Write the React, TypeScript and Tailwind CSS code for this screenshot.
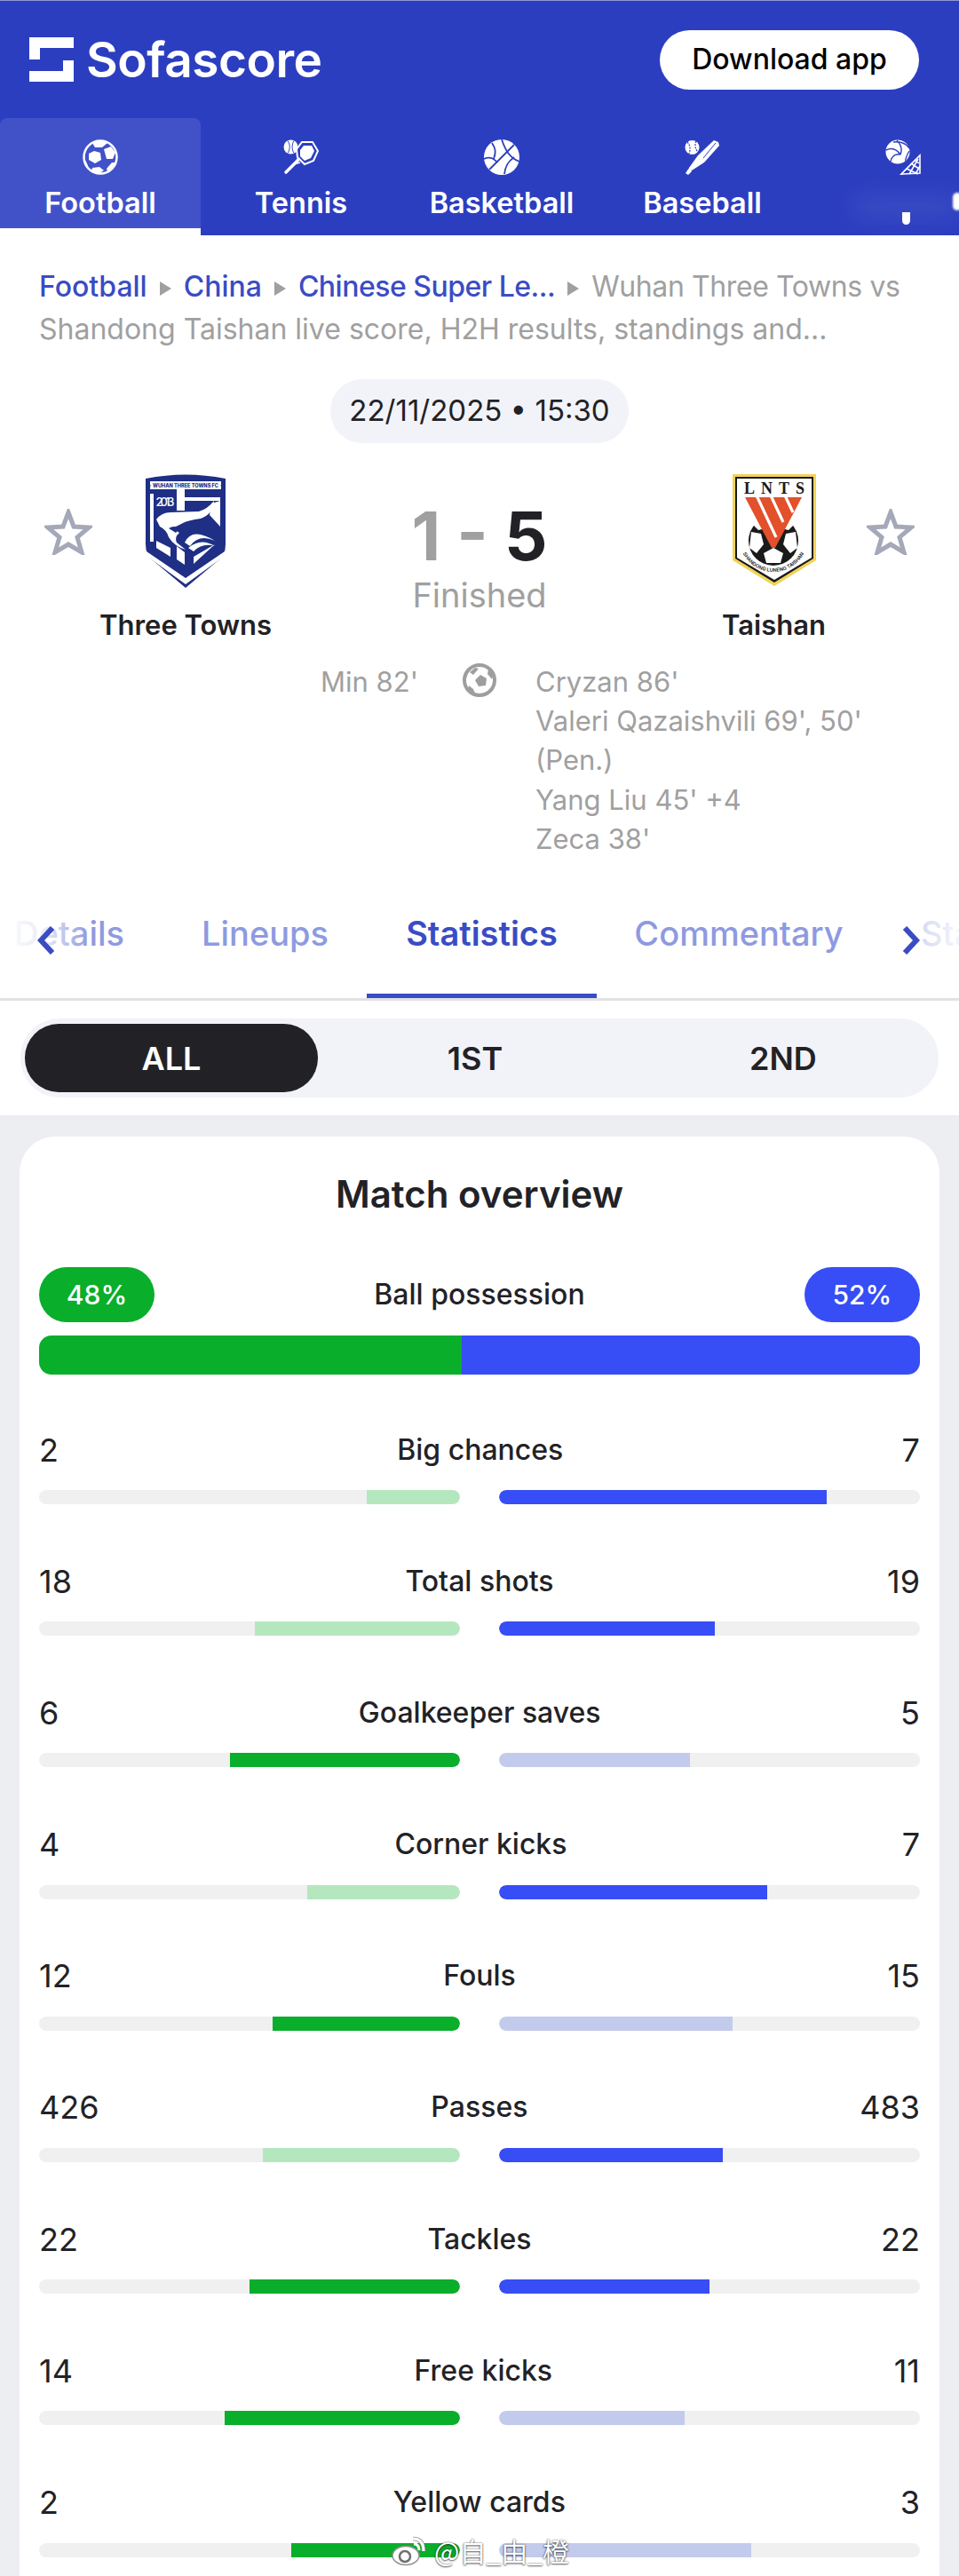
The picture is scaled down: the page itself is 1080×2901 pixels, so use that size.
import React from 'react';

const FootballIcon = () => (
  <svg width="40" height="40" viewBox="0 0 40 40" className="text-white">
    <circle cx="20" cy="20" r="18.5" fill="none" stroke="currentColor" strokeWidth="2.5" />
    <g fill="currentColor">
      <polygon points="13,13 20,15 21,23 14,27 7,23 7,16" />
      <polygon points="24,11 32,8 37,15 34,22 27,22" />
      <polygon points="11,4 20,1 28,4 22,9 14,9" />
      <polygon points="11,32 19,31 24,35 18,39 10,36" />
      <polygon points="33,26 37,26 34,32 28,36 27,33" />
      <polygon points="2,22 5,27 7,33 3,30" />
    </g>
  </svg>
);

const TennisIcon = () => (
  <svg width="40" height="40" viewBox="0 0 40 40" className="text-white">
    <circle cx="8.5" cy="8.5" r="8" fill="currentColor" />
    <path d="M5 1.5c3 4 3 10 0 14M12 1.5c-2.5 4-2.5 10 0 14" fill="none" stroke="#2c3ec0" strokeWidth="1" />
    <polygon points="21,3 33,3 39,13 34,24 24,28 16,20 15,11" fill="none" stroke="currentColor" strokeWidth="2" />
    <polygon points="23,7 32,7 35,13 31,21 24,24 19,19 19,12" fill="currentColor" />
    <path d="M17 23 L3 37" stroke="currentColor" strokeWidth="3.5" strokeLinecap="round" />
    <path d="M17 21 L12 28 L19 26" fill="none" stroke="currentColor" strokeWidth="1.5" />
  </svg>
);

const BasketballIcon = () => (
  <svg width="40" height="40" viewBox="0 0 40 40" className="text-white">
    <circle cx="20" cy="20" r="20" fill="currentColor" />
    <g fill="none" stroke="#2c3ec0" strokeWidth="1.8">
      <path d="M20 0c4 12 9 21 20 25" />
      <path d="M34 6 L6 34" />
      <path d="M9 4c4 6 5 10 2 18" />
      <path d="M0 22c6-3 11-1 15 4" />
      <path d="M23 39c1-9 4-14 11-19" />
    </g>
  </svg>
);

const BaseballIcon = () => (
  <svg width="40" height="40" viewBox="0 0 40 40" className="text-white">
    <circle cx="8.5" cy="9" r="8" fill="currentColor" />
    <path d="M3 3c3 3 4 8 2 13M13 2c-2 4-1 9 2 12" fill="none" stroke="#2c3ec0" strokeWidth="1.2" strokeDasharray="2 1.2" />
    <path d="M33 1 L38 3 L39 7 L22 26 L8 35 L5 32 L15 18 Z" fill="currentColor" />
    <path d="M35 4 L21 21" stroke="#2c3ec0" strokeWidth="1" />
    <path d="M6 31 L3 35 L1 38 L4 40 L8 36" fill="currentColor" />
  </svg>
);

const VolleyballIcon = () => (
  <svg width="40" height="40" viewBox="0 0 40 40" className="text-white">
    <circle cx="14" cy="14" r="13.5" fill="currentColor" />
    <g fill="none" stroke="#2c3ec0" strokeWidth="1.4">
      <path d="M13 1c5 5 6 11 4 16" />
      <path d="M1 12c6-3 11-2 16 5" />
      <path d="M6 25c1-6 5-9 11-8" />
      <path d="M27 13c-3 5-5 11-4 11" />
      <path d="M9 3c8-1 14 1 18 7" />
    </g>
    <g fill="none" stroke="currentColor" strokeWidth="1.6">
      <path d="M39 18 L39 38 L18 39 Z" />
      <path d="M24 33 L37 39M29 27 L38 33M33 23 L38 27M27 39 L37 22M34 39 L39 30" />
    </g>
  </svg>
);

const Star = () => (
  <svg width="54" height="52" viewBox="0 0 54 52">
    <path
      d="M27 4 L33 20 L50 21 L37 32 L42 49 L27 40 L12 49 L17 32 L4 21 L21 20 Z"
      fill="none"
      stroke="#a4a8b8"
      strokeWidth="5"
      strokeLinejoin="miter"
    />
  </svg>
);

const ThreeTownsCrest = () => (
  <svg width="94" height="130" viewBox="0 0 94 130">
    <path d="M2 6 Q47 -3 92 6 L92 80 Q92 92 84 98 L47 129 L10 98 Q2 92 2 80 Z" fill="#1e2f85" />
    <rect x="7" y="9" width="80" height="9" fill="#fff" />
    <text x="47" y="16" textAnchor="middle" fontSize="5.6" fontWeight="800" fill="#1e2f85" fontFamily="Inter, sans-serif">★ WUHAN THREE TOWNS FC ★</text>
    <text x="24" y="37" textAnchor="middle" fontSize="13" fontWeight="500" fill="#fff" fontFamily="Inter, sans-serif" textLength="21">2013</text>
    {/* cross stripes behind the tiger */}
    <path d="M7 23 H11 V77 H7 Z" fill="#fff" />
    <path d="M37 18 H46 V27 H86 V31 H46 V42 H37 Z" fill="#fff" />
    <path d="M76 34 L86 31 V60 L74 47 Z" fill="#fff" />
    {/* tiger head */}
    <path d="M14 52 Q20 44 30 44 L62 43 Q72 40 79 31 Q78 46 64 51 Q50 53 44 56 Q36 60 32 62 L40 67 Q34 72 37 78 L47 86 Q34 82 28 72 Q26 64 18 60 Z" fill="#fff" />
    <path d="M28 62 Q34 58 40 62 L36 67 Z" fill="#1e2f85" />
    {/* whiskers */}
    <path d="M46 78 Q54 60 80 76 Q62 68 52 82 Z" fill="#fff" />
    <path d="M50 84 Q64 72 80 82 Q66 78 56 88 Z" fill="#fff" />
    {/* lower panels */}
    <path d="M37 82 L46 89 V103 L37 97 Z" fill="#fff" />
    <path d="M56 94 L80 80 L56 102 Z" fill="#fff" />
    <path d="M14 76 L30 84 V94 L14 84 Z" fill="#fff" />
    {/* chevron */}
    <path d="M3 88 L47 118 L91 88 V93 L47 125 L3 93 Z" fill="#fff" />
  </svg>
);

const TaishanCrest = () => (
  <svg width="96" height="128" viewBox="0 0 96 128">
    <path d="M1 1 L95 1 L95 98 L48 127 L1 98 Z" fill="#f1d35b" />
    <path d="M4 4 L92 4 L92 96 L48 123 L4 96 Z" fill="#1a1a1a" />
    <path d="M6 6 L90 6 L90 95 L48 120 L6 95 Z" fill="#fff" />
    <text x="48" y="23" textAnchor="middle" fontSize="18" fontWeight="700" fill="#1a1a1a" fontFamily="Liberation Serif, serif" textLength="68">LNTS</text>
    <circle cx="47" cy="76" r="28" fill="#1a1a1a" />
    <polygon points="47,84 36,90 39,101 55,101 58,90" fill="#fff" />
    <polygon points="22,66 33,68 36,80 28,90 20,84" fill="#fff" />
    <polygon points="72,66 61,68 58,80 66,90 74,84" fill="#fff" />
    <polygon points="24,58 32,50 38,62 30,64" fill="#fff" />
    <polygon points="70,58 62,50 56,62 64,64" fill="#fff" />
    <polygon points="15,27 79,27 49,84 45,84" fill="#e2502c" />
    <g stroke="#fff" strokeWidth="3.2">
      <path d="M28 25 L50 72" />
      <path d="M44 25 L58 55" />
      <path d="M60 25 L69 44" />
    </g>
    <text fontSize="5.6" fontWeight="600" fill="#1a1a1a" fontFamily="Inter, sans-serif">
      <textPath href="#taishan-arc" startOffset="50%" textAnchor="middle">SHANDONG LUNENG TAISHAN</textPath>
    </text>
    <defs>
      <path id="taishan-arc" d="M8 72 A39 39 0 0 0 86 72" />
    </defs>
  </svg>
);

const GoalBall = () => (
  <svg width="38" height="38" viewBox="0 0 38 38">
    <circle cx="19" cy="19" r="17" fill="#fff" stroke="#9e9e9e" strokeWidth="4" />
    <polygon points="20,13 27,17 26,25 18,26 14,19" fill="#9e9e9e" />
    <polygon points="8,10 14,5 18,6 12,13" fill="#9e9e9e" />
    <polygon points="7,25 12,29 14,34 6,30" fill="#9e9e9e" />
    <polygon points="29,7 34,13 33,18 28,12" fill="#9e9e9e" />
  </svg>
);

const SofaLogo = () => (
  <svg width="50" height="50" viewBox="0 0 50 50" className="text-white">
    <path d="M0 0 H50 V12 H12 V25 H0 Z" fill="currentColor" />
    <path d="M50 26 V50 H0 V38 H38 V26 Z" fill="currentColor" />
  </svg>
);

const sports = [
  { name: 'Football', icon: <FootballIcon /> },
  { name: 'Tennis', icon: <TennisIcon /> },
  { name: 'Basketball', icon: <BasketballIcon /> },
  { name: 'Baseball', icon: <BaseballIcon /> },
];

const stats = [
  { label: 'Big chances', a: 2, b: 7, aStrong: false, bStrong: true },
  { label: 'Total shots', a: 18, b: 19, aStrong: false, bStrong: true },
  { label: 'Goalkeeper saves', a: 6, b: 5, aStrong: true, bStrong: false },
  { label: 'Corner kicks', a: 4, b: 7, aStrong: false, bStrong: true },
  { label: 'Fouls', a: 12, b: 15, aStrong: true, bStrong: false },
  { label: 'Passes', a: 426, b: 483, aStrong: false, bStrong: true },
  { label: 'Tackles', a: 22, b: 22, aStrong: true, bStrong: true },
  { label: 'Free kicks', a: 14, b: 11, aStrong: true, bStrong: false },
  { label: 'Yellow cards', a: 2, b: 3, aStrong: true, bStrong: false },
];

const scorers = ["Cryzan 86'", "Valeri Qazaishvili 69', 50' (Pen.)", "Yang Liu 45' +4", "Zeca 38'"];

const Caret = () => <span className="mx-[14px] inline-block border-y-[8px] border-l-[13px] border-y-transparent border-l-[#a0a0a0] align-[1px]" />;

const StatRow = ({ label, a, b, aStrong, bStrong }: (typeof stats)[number]) => {
  const total = a + b;
  return (
    <div className="h-[148.2px]">
      <div className="flex h-[53px] items-center justify-between text-[#222226]">
        <span className="text-[36px] leading-none">{a}</span>
        <span className="text-[32px] font-medium leading-none">{label}</span>
        <span className="text-[36px] leading-none">{b}</span>
      </div>
      <div className="mt-[19px] flex gap-[44px]">
        <div className="flex h-4 flex-1 justify-end overflow-hidden rounded-lg bg-[#f0f0f0]">
          <div
            className={`h-full rounded-r-lg ${aStrong ? 'bg-[#09ae2b]' : 'bg-[#b5e7bf]'}`}
            style={{ width: `${(a / total) * 100}%` }}
          />
        </div>
        <div className="h-4 flex-1 overflow-hidden rounded-lg bg-[#f0f0f0]">
          <div
            className={`h-full rounded-l-lg ${bStrong ? 'bg-[#374df5]' : 'bg-[#c3cbed]'}`}
            style={{ width: `${(b / total) * 100}%` }}
          />
        </div>
      </div>
    </div>
  );
};

const App = () => {
  return (
    <div className="relative h-[2901px] w-[1080px] overflow-hidden bg-white font-[Inter,sans-serif]">
      {/* Top bar */}
      <header className="h-[265px] border-t border-[#8f98d8] bg-[#2c3ec0]">
        <div className="flex h-[132px] items-center justify-between pl-[33px] pr-[45px]">
          <div className="flex items-center gap-[14px]">
            <SofaLogo />
            <span className="text-[55px] font-semibold leading-none tracking-[-0.5px] text-white">Sofascore</span>
          </div>
          <button className="h-[67px] w-[292px] rounded-full bg-white text-[32px] font-medium text-black">Download app</button>
        </div>
        <nav className="flex h-[132px] overflow-hidden">
          {sports.map((s, i) => (
            <div
              key={s.name}
              className={`flex w-[226px] shrink-0 flex-col items-center pt-[24px] ${i === 0 ? 'h-[132px] rounded-t-lg border-b-8 border-white bg-[#4152c9]' : ''}`}
            >
              {s.icon}
              <span className="mt-[12px] text-[32.5px] font-semibold leading-[40px] text-white">{s.name}</span>
            </div>
          ))}
          <div className="relative flex w-[226px] shrink-0 flex-col items-center pt-[24px]">
            <VolleyballIcon />
            <div className="absolute left-[56px] top-[88px] h-[24px] w-[120px] rounded-full bg-[#3b4cc4] blur-md" />
            <div className="absolute left-[112px] top-[106px] h-[14px] w-[9px] rounded-b-full bg-white" />
            <div className="absolute left-[169px] top-[84px] h-[20px] w-[10px] rounded-full bg-white blur-[1px]" />
          </div>
        </nav>
      </header>

      {/* Breadcrumbs */}
      <div className="pl-[44px] pt-[34px] text-[32px] leading-[48px] text-[#a0a0a0]">
        <div className="whitespace-nowrap">
          <span className="font-medium text-[#3a4cc4]">Football</span>
          <Caret />
          <span className="font-medium text-[#3a4cc4]">China</span>
          <Caret />
          <span className="font-medium tracking-[-0.5px] text-[#3a4cc4]">Chinese Super Le...</span>
          <Caret />
          <span className="tracking-[-0.4px]">Wuhan Three Towns vs</span>
        </div>
        <div className="whitespace-nowrap">Shandong Taishan live score, H2H results, standings and...</div>
      </div>

      {/* Date */}
      <div className="mt-[32px] flex justify-center">
        <div className="flex h-[72px] w-[336px] items-center justify-center rounded-[36px] bg-[#f2f3f8] text-[33px] text-[#222226]">
          22/11/2025 • 15:30
        </div>
      </div>

      {/* Match head */}
      <div className="relative mt-[34px] flex h-[200px] justify-between">
        <div className="flex w-[340px] items-start">
          <div className="ml-[50px] mt-[40px]">
            <Star />
          </div>
          <div className="ml-[8px] flex flex-col items-center">
            <ThreeTownsCrest />
            <span className="mt-[21px] whitespace-nowrap text-[31px] font-semibold leading-[40px] text-[#222226]">Three Towns</span>
          </div>
        </div>
        <div className="flex flex-col items-center pt-[30px]">
          <div className="text-[76px] font-bold leading-[80px]">
            <span className="text-[#a0a0a0]">1 - </span>
            <span className="text-[#222226]">5</span>
          </div>
          <span className="mt-[5px] text-[38px] leading-[44px] text-[#a0a0a0]">Finished</span>
        </div>
        <div className="flex w-[340px] items-start justify-end">
          <div className="flex flex-col items-center">
            <TaishanCrest />
            <span className="mt-[23px] text-[31px] font-semibold leading-[40px] text-[#222226]">Taishan</span>
          </div>
          <div className="ml-[46px] mr-[50px] mt-[40px]">
            <Star />
          </div>
        </div>
      </div>

      {/* Goals */}
      <div className="mt-[13px] flex h-[256px] text-[31px] leading-[44.2px] text-[#a0a0a0]">
        <div className="w-[471px] text-right">Min 82'</div>
        <div className="ml-[50px] mt-[1px] w-[38px]">
          <GoalBall />
        </div>
        <div className="ml-[44px] w-[410px]">
          {scorers.map((s) => (
            <div key={s}>{s}</div>
          ))}
        </div>
      </div>

      {/* Match tabs */}
      <div className="relative h-[125px] overflow-hidden border-b-[3px] border-[#e2e2e6]">
        <div className="-ml-[28px] flex h-full w-[1300px] text-[38px] font-medium text-[#8e9ae0]">
          <span className="w-[212px] shrink-0 pt-[24px] text-center leading-[50px]">Details</span>
          <span className="w-[229px] shrink-0 pt-[24px] text-center leading-[50px]">Lineups</span>
          <span className="relative w-[259px] shrink-0 pt-[24px] text-center font-semibold leading-[50px] text-[#3a4cc4]">
            Statistics
            <span className="absolute inset-x-0 bottom-0 h-[5px] bg-[#3a4cc4]" />
          </span>
          <span className="w-[320px] shrink-0 pt-[24px] text-center leading-[50px]">Commentary</span>
          <span className="shrink-0 pl-[45px] pt-[24px] leading-[50px]">Statistics</span>
        </div>
        <div className="absolute inset-y-0 left-0 w-[100px] bg-gradient-to-r from-white via-white/80 to-transparent" />
        <div className="absolute inset-y-0 right-0 w-[50px] bg-gradient-to-l from-white/90 to-white/60" />
        <svg className="absolute left-[42px] top-[41px]" width="20" height="32" viewBox="0 0 20 32">
          <path d="M17 2 L4 16 L17 30" fill="none" stroke="#3a4cc4" strokeWidth="6" />
        </svg>
        <svg className="absolute left-[1016px] top-[41px]" width="20" height="32" viewBox="0 0 20 32">
          <path d="M3 2 L16 16 L3 30" fill="none" stroke="#3a4cc4" strokeWidth="6" />
        </svg>
      </div>

      {/* Period switch */}
      <div className="px-[23px] pt-[20px]">
        <div className="flex h-[89px] items-center rounded-[44px] bg-[#f2f3f8] px-[5px] text-[36px] font-semibold text-[#222226]">
          <div className="flex h-[77px] w-[330px] items-center justify-center rounded-[38px] bg-[#222226] text-white">ALL</div>
          <div className="w-[354px] text-center">1ST</div>
          <div className="w-[340px] text-center">2ND</div>
        </div>
      </div>

      {/* Statistics */}
      <div className="mt-[20px] h-[1700px] bg-[#edeef2] px-[22px] pt-[24px]">
        <div className="rounded-[40px] bg-white px-[22px] pb-[40px]">
          <h2 className="pt-[42px] text-center text-[42px] font-semibold leading-[46px] text-[#222226]">Match overview</h2>
          <div className="mt-[59px] flex h-[62px] items-center justify-between">
            <span className="flex h-[62px] w-[130px] items-center justify-center rounded-[31px] bg-[#09ae2b] text-[30px] font-medium text-white">48%</span>
            <span className="text-[32px] font-medium text-[#222226]">Ball possession</span>
            <span className="flex h-[62px] w-[130px] items-center justify-center rounded-[31px] bg-[#374df5] text-[30px] font-medium text-white">52%</span>
          </div>
          <div className="mt-[15px] flex h-[44px] overflow-hidden rounded-[14px]">
            <div className="w-[476px] bg-[#09ae2b]" />
            <div className="flex-1 bg-[#374df5]" />
          </div>
          <div className="mt-[58px]">
            {stats.map((s) => (
              <StatRow key={s.label} {...s} />
            ))}
          </div>
        </div>
      </div>

      {/* Watermark */}
      <div className="absolute left-[441px] top-[2854px] flex items-center gap-[8px] text-white [text-shadow:0_0_2px_rgba(0,0,0,0.7),0_1px_2px_rgba(0,0,0,0.5)]">
        <svg width="40" height="36" viewBox="0 0 40 36">
          <ellipse cx="16" cy="24" rx="15" ry="10.5" fill="#fff" stroke="#909090" strokeWidth="1.5" />
          <circle cx="15" cy="25" r="6" fill="none" stroke="#707070" strokeWidth="2.5" />
          <path d="M24 5 Q36 5 36 19" fill="none" stroke="#909090" strokeWidth="4.5" />
          <path d="M24 5 Q36 5 36 19 M25 11 Q31 11 31 18" fill="none" stroke="#fff" strokeWidth="3" />
        </svg>
        <span className="font-['Noto_Sans_CJK_SC',sans-serif] text-[30px] leading-none">@自_由_橙</span>
      </div>
    </div>
  );
};

export default App;
